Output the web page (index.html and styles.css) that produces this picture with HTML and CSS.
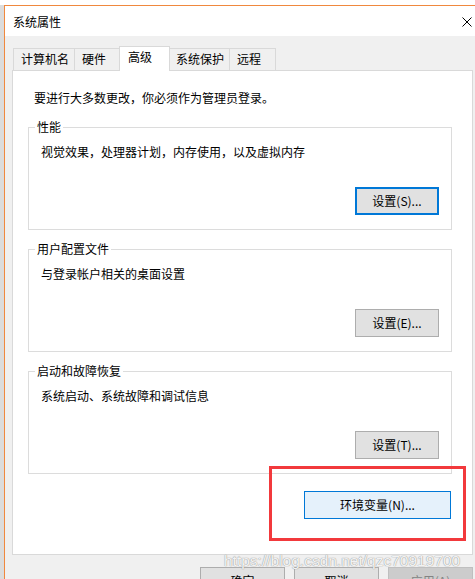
FILE: index.html
```html
<!DOCTYPE html>
<html lang="zh-CN">
<head>
  <meta charset="UTF-8">
  <meta name="viewport" content="width=device-width, initial-scale=1.0">
  <title>系统属性</title>
  <link rel="stylesheet" href="styles.css">
</head>
<body>

<div class="window">
  <div class="titlebar">
    <span class="title">系统属性</span>
    <svg class="close" width="10" height="10" viewBox="0 0 10 10" aria-label="关闭">
      <path d="M0.5 0.5 L9.5 9.5 M9.5 0.5 L0.5 9.5" stroke="#000" stroke-width="1" fill="none"/>
    </svg>
  </div>

  <div class="tabs">
    <div class="tab tab-wide">计算机名</div>
    <div class="tab">硬件</div>
    <div class="tab active">高级</div>
    <div class="tab tab-wide">系统保护</div>
    <div class="tab">远程</div>
  </div>

  <div class="panel">
    <p class="note">要进行大多数更改，你必须作为管理员登录。</p>

    <div class="group">
      <span class="group-title">性能</span>
      <p class="group-text">视觉效果，处理器计划，内存使用，以及虚拟内存</p>
      <button type="button" class="btn btn-default">设置(S)...</button>
    </div>

    <div class="group">
      <span class="group-title">用户配置文件</span>
      <p class="group-text">与登录帐户相关的桌面设置</p>
      <button type="button" class="btn">设置(E)...</button>
    </div>

    <div class="group">
      <span class="group-title">启动和故障恢复</span>
      <p class="group-text">系统启动、系统故障和调试信息</p>
      <button type="button" class="btn">设置(T)...</button>
    </div>

    <button type="button" class="btn btn-env">环境变量(N)...</button>
  </div>

  <div class="actions">
    <button type="button" class="btn btn-action">确定</button>
    <button type="button" class="btn btn-action">取消</button>
    <button type="button" class="btn btn-action" disabled>应用(A)</button>
  </div>

  <!-- annotation + watermark from the screenshot -->
  <div class="highlight"></div>
  <div class="watermark">https://blog.csdn.net/qzc70919700</div>
</div>

</body>
</html>
```

FILE: styles.css
```css
html, body {
  margin: 0;
  height: 100%;
}
body {
  font-family: "Noto Sans CJK SC", "Liberation Sans", sans-serif;
  font-size: 12px;
  line-height: 16px;
  color: #000;
  background: linear-gradient(#fff 5px, #dcdcdc 5px);
  padding: 5px 0 0 4px;
  box-sizing: border-box;
  overflow: hidden;
}
.window {
  position: relative;
  width: 471px;
  height: 580px;
  box-sizing: border-box;
  border-top: 1px solid #f0883e;
  border-left: 1px solid #f0883e;
  background: #f0f0f0;
}
.titlebar {
  height: 30px;
  background: #fff;
  display: flex;
  align-items: center;
  justify-content: space-between;
  padding: 1px 3px 0 8px;
  box-sizing: border-box;
}
.close {
  display: block;
}
.tabs {
  display: flex;
  align-items: flex-end;
  margin: 10px 0 0 8px;
  height: 24px;
}
.tab {
  box-sizing: border-box;
  height: 22px;
  min-width: 47px;
  padding: 2px 6px 0 7px;
  border: 1px solid #d9d9d9;
  border-bottom: none;
  background: #f0f0f0;
  margin-left: -1px;
}
.tab:first-child {
  margin-left: 0;
}
.tab-wide {
  padding-right: 5px;
}
.active {
  position: relative;
  z-index: 1;
  height: 25px;
  min-width: 51px;
  margin: 0 -1px -1px -2px;
  padding: 2px 0 0 8px;
  background: #fff;
}
.panel {
  width: 461px;
  box-sizing: border-box;
  margin-left: 7px;
  border: 1px solid #d9d9d9;
  background: #fff;
  padding: 19px 20px 35px 15px;
  display: flex;
  flex-direction: column;
}
.note {
  margin: 0 0 0 6px;
}
.group {
  display: flex;
  flex-direction: column;
  border: 1px solid #dcdcdc;
  padding: 0 12px 14px 12px;
  margin-top: 19px;
}
.note + .group {
  margin-top: 21px;
}
.group-title {
  align-self: flex-start;
  margin: -9px 0 0 -6px;
  padding: 0 2px;
  background: #fff;
}
.group-text {
  margin: 9px 0 0 0;
}
.btn {
  font-family: inherit;
  font-size: 12px;
  line-height: 16px;
  color: #000;
  height: 28px;
  box-sizing: border-box;
  border: 1px solid #adadad;
  background: #e1e1e1;
  padding: 0;
  cursor: pointer;
}
.group .btn {
  align-self: flex-end;
  width: 84px;
  margin-top: 27px;
}
.btn-default {
  border: 2px solid #0078d7;
}
.btn-env {
  align-self: flex-end;
  width: 147px;
  margin: 17px 1px 0 0;
  background: #e5f1fb;
  border-color: #0078d7;
}
.actions {
  display: flex;
  justify-content: flex-end;
  gap: 9px;
  width: 461px;
  margin: 12px 0 0 7px;
}
.btn-action {
  width: 85px;
}
.btn-action:disabled {
  background: #cccccc;
  border-color: #bfbfbf;
  color: #838383;
  cursor: default;
}
.highlight {
  position: absolute;
  left: 264px;
  top: 460px;
  width: 197px;
  height: 75px;
  box-sizing: border-box;
  border: 3px solid #f2393c;
}
.watermark {
  position: absolute;
  left: 219px;
  top: 545px;
  font-family: "Liberation Sans", Arial, sans-serif;
  font-size: 15.5px;
  line-height: 20px;
  color: rgba(255, 255, 255, 0.9);
  text-shadow: 0 0 1px #9a9a9a, 0 0 1px #9a9a9a;
  white-space: nowrap;
}
```
